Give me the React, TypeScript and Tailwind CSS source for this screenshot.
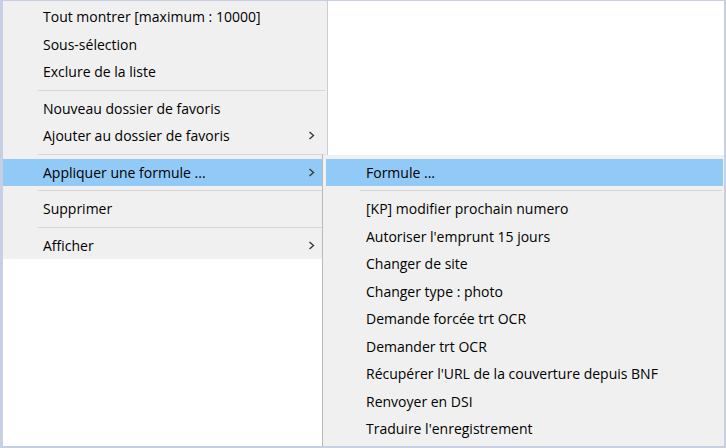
import type { ReactNode } from "react";

function Chevron() {
  return (
    <svg width="7" height="9" viewBox="0 0 7 9" className="mr-[12px] shrink-0">
      <polyline points="1.5,1 5.5,4.5 1.5,8" fill="none" stroke="#3a3a3a" strokeWidth="1.4" />
    </svg>
  );
}

function Item({
  label,
  active,
  sub
}: {
  label: ReactNode;
  active?: boolean;
  sub?: boolean;
}) {
  return (
    <div
      className={`flex h-[27.5px] items-center pl-[40px] ${active ? "bg-[#91c9f7]" : ""}`}
    >
      <span className="flex-1 whitespace-nowrap">{label}</span>
      {sub ? <Chevron /> : null}
    </div>
  );
}

function Separator({ left, right }: { left: string; right: string }) {
  return (
    <div className={`flex h-[9px] items-center ${left} ${right}`}>
      <div className="h-px flex-1 bg-[#d6d6d6]" />
    </div>
  );
}

const subItems = [
  "[KP] modifier prochain numero",
  "Autoriser l'emprunt 15 jours",
  "Changer de site",
  "Changer type : photo",
  "Demande forcée trt OCR",
  "Demander trt OCR",
  "Récupérer l'URL de la couverture depuis BNF",
  "Renvoyer en DSI",
  "Traduire l'enregistrement"
];

export default function App() {
  return (
    <div className="relative h-[448px] w-[726px] overflow-hidden border-t border-r-2 border-b-2 border-l-[3px] border-[#c6d0e2] bg-white font-['Open_Sans',sans-serif] text-[14px] text-black">
      <div className="w-[325px] border-r border-[#cccccc] bg-[#f0f0f0] pt-[2px]">
        <Item label="Tout montrer [maximum : 10000]" />
        <Item label="Sous-sélection" />
        <Item label="Exclure de la liste" />
        <Separator left="pl-[35px]" right="pr-[2px]" />
        <Item label="Nouveau dossier de favoris" />
        <Item label="Ajouter au dossier de favoris" sub />
        <Separator left="pl-[35px]" right="pr-[2px]" />
        <Item label="Appliquer une formule ..." active sub />
        <Separator left="pl-[35px]" right="pr-[2px]" />
        <Item label="Supprimer" />
        <Separator left="pl-[35px]" right="pr-[2px]" />
        <Item label="Afficher" sub />
      </div>

      <div className="absolute top-[154px] left-[319px] h-[291px] w-[402px] border-l border-[#b9b9b9] bg-[#f0f0f0] pt-[3.5px] pr-px pb-[3.5px] pl-[3px]">
        <Item label="Formule ..." active />
        <Separator left="pl-[34px]" right="pr-px" />
        {subItems.map((label) => (
          <Item key={label} label={label} />
        ))}
      </div>
    </div>
  );
}
